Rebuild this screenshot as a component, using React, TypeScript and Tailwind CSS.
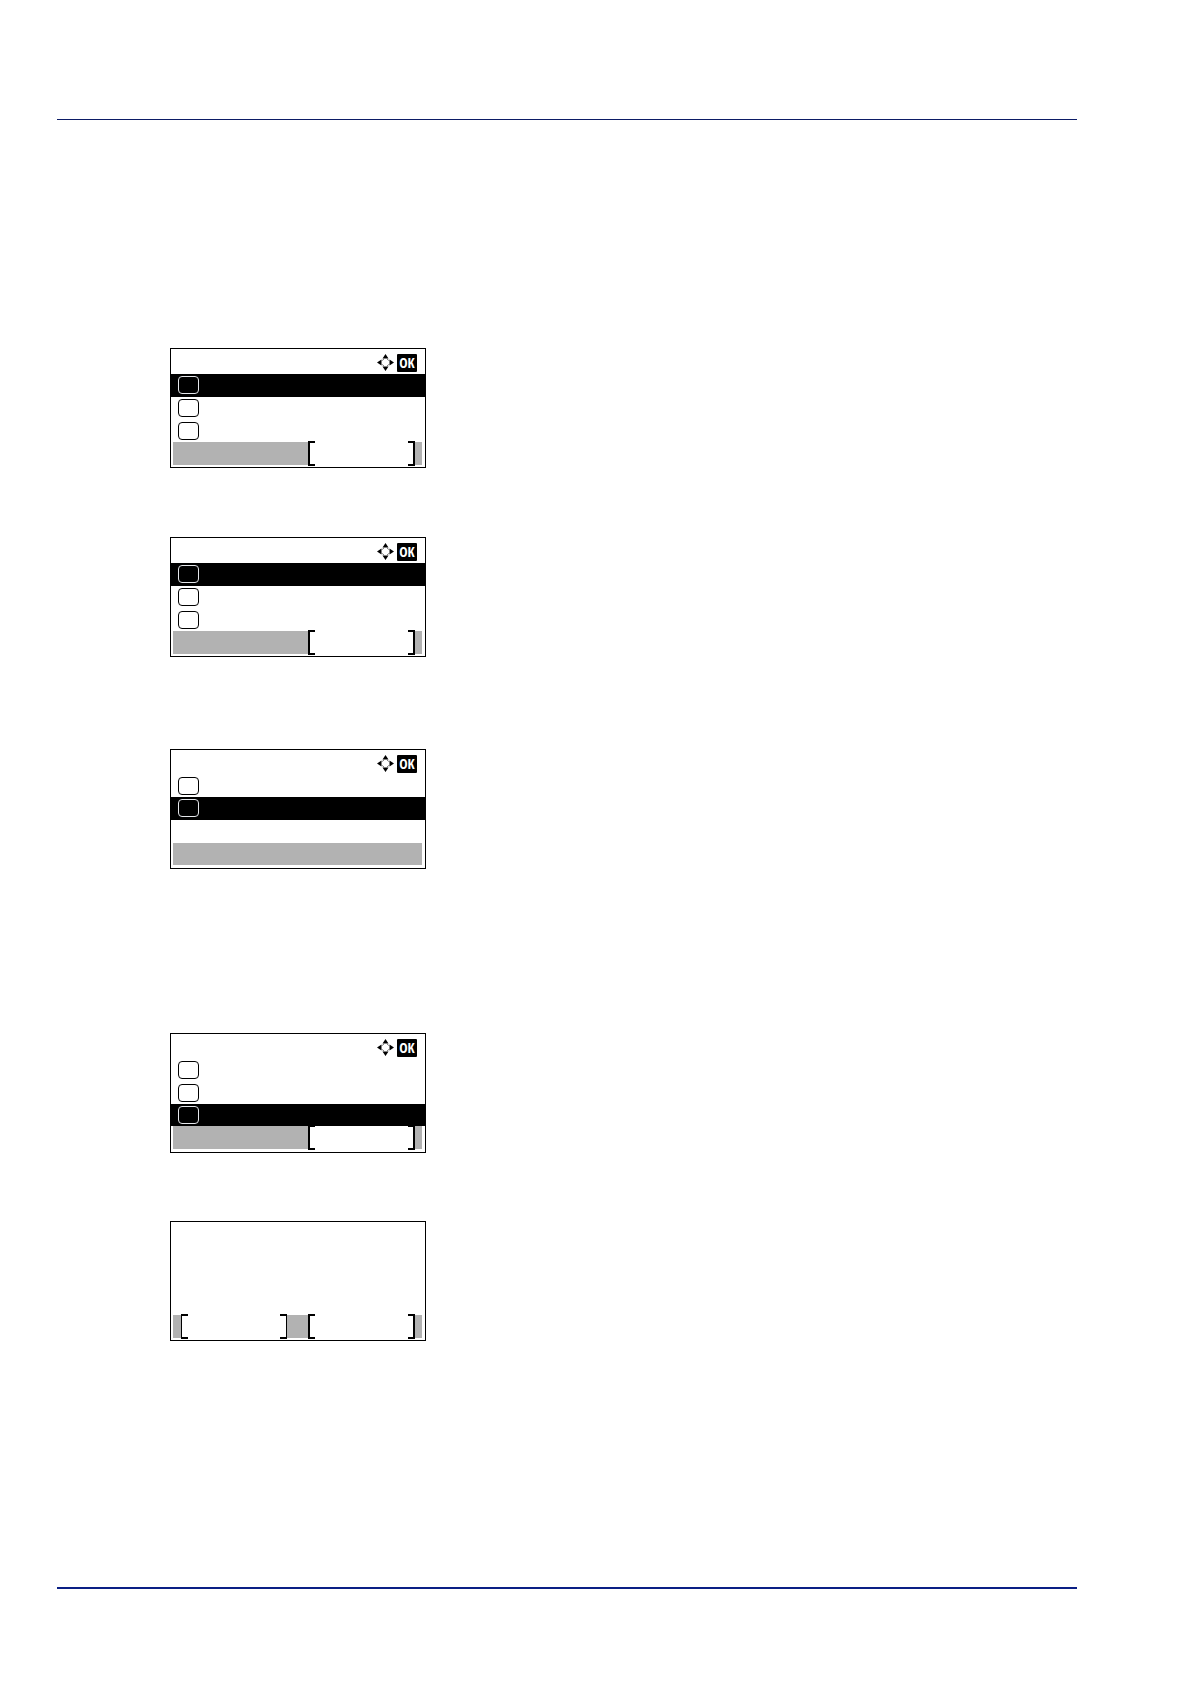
type Row = { boxed: boolean; active: boolean; size: string };

const tall = 'h-[23px]';
const short = 'h-[22px]';

function Arrows() {
  return (
    <svg width="17" height="17" viewBox="0 0 17 17" aria-hidden="true">
      <path d="M8.5 0 11.5 4.5H5.5ZM8.5 17 5.5 12.5h6ZM0 8.5 4.5 5.5v6ZM17 8.5 12.5 11.5V5.5Z" fill="#000" />
      <path
        d="M5.2 6.6 6.6 5.2M10.4 5.2 11.8 6.6M11.8 10.4 10.4 11.8M6.6 11.8 5.2 10.4"
        fill="none"
        stroke="#444"
        strokeWidth="1"
      />
    </svg>
  );
}

function Header() {
  return (
    <div className="flex h-[25px] items-start justify-end gap-[3px] pr-2 pt-[5px]">
      <Arrows />
      <span className="flex h-[18px] w-5 items-center justify-center rounded-[1px] bg-black font-['Open_Sans_Condensed','Roboto_Condensed','Liberation_Sans',sans-serif] text-[14px] leading-none font-bold text-white">
        OK
      </span>
    </div>
  );
}

function MenuRow({ row }: { row: Row }) {
  return (
    <li className={`flex items-start pt-[2px] pl-[7px] ${row.size} ${row.active ? 'bg-black' : 'bg-white'}`}>
      {row.boxed && (
        <span
          className={`h-[18px] w-[21px] rounded-[4px] border ${row.active ? 'border-gray-200' : 'border-black'}`}
        />
      )}
    </li>
  );
}

function SoftKey({ thin = false, size }: { thin?: boolean; size: string }) {
  return (
    <div className={`flex h-full shrink-0 items-center justify-between bg-white ${size}`}>
      <span className={`h-[25px] w-[7px] border-y-2 border-black ${thin ? 'border-l' : 'border-l-2'}`} />
      <span className={`h-[25px] w-[7px] border-y-2 border-black ${thin ? 'border-r' : 'border-r-2'}`} />
    </div>
  );
}

function Footer({ left = false, right = false, size = tall }: { left?: boolean; right?: boolean; size?: string }) {
  return (
    <div className={`mr-[3px] ml-[2px] flex items-center bg-[#b2b2b2] pr-[7px] pl-2 ${size}`}>
      {left && <SoftKey thin size="w-[106px]" />}
      <div className="grow" />
      {right && <SoftKey size="w-[107px]" />}
    </div>
  );
}

function Panel({ rows, softKey = false }: { rows: Row[]; softKey?: boolean }) {
  return (
    <section className="h-[120px] w-64 border border-black bg-white">
      <Header />
      <ul>
        {rows.map((row, i) => (
          <MenuRow key={i} row={row} />
        ))}
      </ul>
      <Footer right={softKey} size={softKey ? tall : short} />
    </section>
  );
}

const firstActive: Row[] = [
  { boxed: true, active: true, size: tall },
  { boxed: true, active: false, size: tall },
  { boxed: true, active: false, size: short },
];

const secondActive: Row[] = [
  { boxed: true, active: false, size: short },
  { boxed: true, active: true, size: tall },
  { boxed: false, active: false, size: tall },
];

const thirdActive: Row[] = [
  { boxed: true, active: false, size: tall },
  { boxed: true, active: false, size: short },
  { boxed: true, active: true, size: short },
];

export default function App() {
  return (
    <div className="min-h-screen bg-white pt-[119px] pr-[113px] pb-[95px] pl-[57px]">
      <header className="h-px bg-[#0c1c66]" />
      <main className="flex flex-col items-start pt-[228px] pb-[246px] pl-[113px]">
        <Panel rows={firstActive} softKey />
        <div className="mt-[69px]">
          <Panel rows={firstActive} softKey />
        </div>
        <div className="mt-[92px]">
          <Panel rows={secondActive} />
        </div>
        <div className="mt-[164px]">
          <Panel rows={thirdActive} softKey />
        </div>
        <section className="mt-[68px] flex h-[120px] w-64 flex-col justify-end border border-black bg-white pb-[2px]">
          <Footer left right />
        </section>
      </main>
      <footer className="h-[2px] bg-[#0a1f84]" />
    </div>
  );
}
